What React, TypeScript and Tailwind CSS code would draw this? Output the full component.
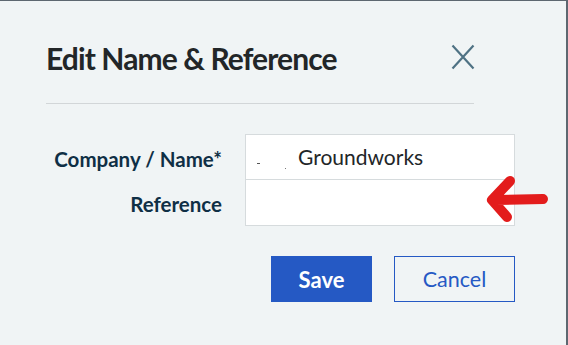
export default function App() {
  return (
    <div
      className="relative h-[345px] w-[568px] overflow-hidden border-t border-r-2 border-[#5d6770] bg-[#f0f4f5]"
      style={{ fontFamily: 'Lato, "Open Sans", sans-serif' }}
    >
      <div className="ml-[46px] w-[428px]">
        <div className="flex h-[102px] items-center justify-between pt-[12px]">
          <h2 className="text-[30px] font-bold leading-none tracking-[-0.9px] text-[#222628]">Edit Name &amp; Reference</h2>
          <svg width="24" height="26" viewBox="0 0 24 26" className="mr-[-1px] mt-[-2px]">
            <path d="M1.5 1.5 L22.5 24.5 M22.5 1.5 L1.5 24.5" stroke="#4f7284" strokeWidth="2.2" fill="none" />
          </svg>
        </div>
        <div className="h-px bg-[#d2d6d8]" />
      </div>

      <div className="ml-[46px] mt-[30px] grid grid-cols-[176px_270px] gap-x-[23px]">
        <div className="flex flex-col text-right text-[20.5px] font-bold text-[#0f2f45]">
          <div className="flex h-[46px] items-center justify-end pt-[5px]">Company / Name*</div>
          <div className="flex h-[46px] items-center justify-end pt-[2px]">Reference</div>
        </div>
        <div className="border border-[#d6dbdd] bg-white">
          <div className="relative flex h-[45px] items-center border-b border-[#d6dbdd] pl-[52px] text-[21px] text-[#222628]">
            <span className="absolute left-[11px] top-[28px] h-px w-[3px] bg-[#555]" />
            <span className="absolute left-[39px] top-[33px] h-px w-px bg-[#777]" />
            Groundworks
          </div>
          <div className="h-[45px]" />
        </div>
      </div>

      <div className="ml-[271px] mt-[30px] flex w-[244px] gap-[22px]">
        <button className="h-[46px] w-[101px] bg-[#2559c4] text-[22px] font-bold text-white">Save</button>
        <button className="h-[46px] w-[121px] border border-[#2559c4] text-[21.5px] text-[#2559c4]">Cancel</button>
      </div>

      <svg
        className="pointer-events-none absolute left-[480px] top-[170px]"
        width="72"
        height="56"
        viewBox="480 170 72 56"
      >
        <path
          d="M543 198 L496 199 M510 180 L492 199 L507 216"
          fill="none"
          stroke="#e31c1c"
          strokeWidth="10"
          strokeLinecap="round"
          strokeLinejoin="round"
        />
      </svg>
    </div>
  );
}
